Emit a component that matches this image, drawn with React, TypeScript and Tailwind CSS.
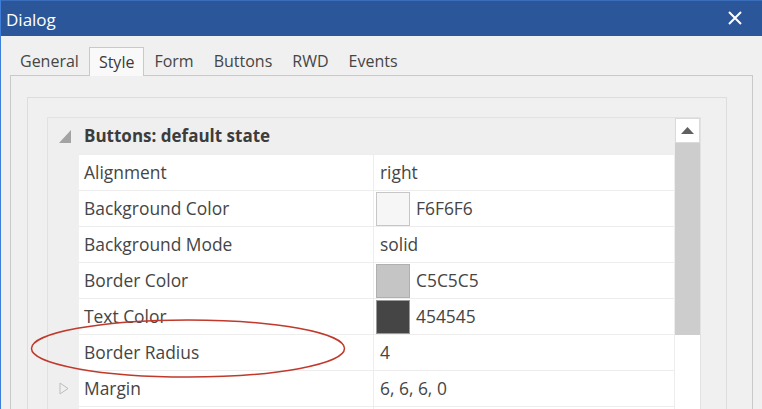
import React from 'react';

type Row = {
  name: string;
  value: string;
  swatch?: string;
  expandable?: boolean;
};

const rows: Row[] = [
  { name: 'Alignment', value: 'right' },
  { name: 'Background Color', value: 'F6F6F6', swatch: 'bg-[#F6F6F6] border-[#C6C6C6]' },
  { name: 'Background Mode', value: 'solid' },
  { name: 'Border Color', value: 'C5C5C5', swatch: 'bg-[#C5C5C5] border-[#B0B0B0]' },
  { name: 'Text Color', value: '454545', swatch: 'bg-[#454545] border-[#9A9A9A]' },
  { name: 'Border Radius', value: '4' },
  { name: 'Margin', value: '6, 6, 6, 0', expandable: true },
];

const tabs = ['General', 'Style', 'Form', 'Buttons', 'RWD', 'Events'];

const App: React.FC = () => {
  return (
    <div
      className="relative w-[762px] h-[409px] overflow-hidden bg-[#F0F0F0] border-l border-[#3F7FD9] text-[#454545]"
      style={{ fontFamily: '"Open Sans", "Noto Sans", sans-serif' }}
    >
      {/* title bar */}
      <div className="h-[36px] bg-[#2B579A] border-t border-[#3A6DBA] flex items-center justify-between pl-[5px] pr-[20px] text-white">
        <span className="text-[17px] leading-none pt-[1px]">Dialog</span>
        <svg width="14" height="14" viewBox="0 0 14 14" className="mb-[1px]">
          <path d="M1 1 L13 13 M13 1 L1 13" stroke="white" strokeWidth="2" />
        </svg>
      </div>

      {/* tabs */}
      <div className="flex pl-[9px] pt-[11px] text-[16px]">
        {tabs.map((t) => (
          <div
            key={t}
            className={
              t === 'Style'
                ? 'h-[29px] px-[9px] flex items-center border border-b-0 border-[#C9C9C9] bg-[#F9F9F9] -mb-px relative z-10 text-[#3a3a3a]'
                : 'h-[28px] px-[10px] flex items-center text-[#454545]'
            }
          >
            {t}
          </div>
        ))}
      </div>

      {/* tab pane */}
      <div className="ml-[9px] mr-[9px] border border-[#C9C9C9] bg-[#F0F0F0] pt-[21px] pl-[16px] pr-[25px] h-[400px]">
        {/* group box */}
        <div className="border border-[#DDDDDD] pt-[19px] pl-[19px] pr-[25px] h-[400px]">
          {/* property grid */}
          <div className="flex border border-[#E2E2E2] bg-white h-[400px]">
            <div className="flex-1 flex flex-col">
              {/* category */}
              <div className="h-[36px] flex items-center bg-[#EFEFEF]">
                <div className="w-[31px] flex justify-center pl-[2px]">
                  <svg width="12" height="13" viewBox="0 0 12 13">
                    <path d="M12 0 L12 13 L0 13 Z" fill="#A3A3A3" />
                  </svg>
                </div>
                <span className="pl-[5px] text-[17px] font-bold text-[#3C3C3C]">Buttons: default state</span>
              </div>
              {rows.map((r) => (
                <div key={r.name} className="h-[36px] flex">
                  <div className="w-[31px] bg-[#EFEFEF] flex items-center justify-center pl-[1px]">
                    {r.expandable && (
                      <svg width="10" height="13" viewBox="0 0 10 13">
                        <path d="M1 1 L9 6.5 L1 12 Z" fill="none" stroke="#BDBDBD" strokeWidth="1" />
                      </svg>
                    )}
                  </div>
                  <div className="w-[295px] flex items-center pl-[5px] border-t border-r border-[#EDEDED] text-[17.4px]">
                    {r.name}
                  </div>
                  <div className="flex-1 flex items-center border-t border-[#EDEDED] text-[17.4px]">
                    {r.swatch ? (
                      <>
                        <div className={`w-[34px] h-[34px] ml-[2px] border ${r.swatch}`} />
                        <span className="pl-[6px]">{r.value}</span>
                      </>
                    ) : (
                      <span className="pl-[6px]">{r.value}</span>
                    )}
                  </div>
                </div>
              ))}
              {/* next row, out of view */}
              <div className="h-[36px] flex">
                <div className="w-[31px] bg-[#EFEFEF]" />
                <div className="w-[295px] border-t border-r border-[#EDEDED]" />
                <div className="flex-1 border-t border-[#EDEDED]" />
              </div>
            </div>

            {/* scrollbar */}
            <div className="w-[26px] flex flex-col bg-white border-l border-[#EDEDED]">
              <div className="h-[25px] flex items-center justify-center border border-[#DADADA] bg-white">
                <svg width="13" height="7" viewBox="0 0 13 7">
                  <path d="M6.5 0 L13 7 L0 7 Z" fill="#606060" />
                </svg>
              </div>
              <div className="h-[192px] bg-[#CDCDCD]" />
              <div className="flex-1 bg-white" />
            </div>
          </div>
        </div>
      </div>

      {/* highlight ellipse */}
      <svg
        className="absolute left-[28px] top-[318px] pointer-events-none"
        width="318"
        height="62"
        viewBox="0 0 318 62"
      >
        <ellipse cx="159" cy="30.5" rx="156.5" ry="28.5" fill="none" stroke="#C0392B" strokeWidth="1.5" />
      </svg>
    </div>
  );
};

export default App;
